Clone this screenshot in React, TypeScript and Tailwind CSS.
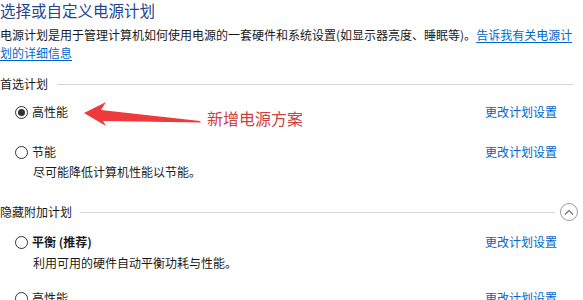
import React from "react";

function Radio({ checked }: { checked?: boolean }) {
  return (
    <span className="flex h-[13px] w-[13px] shrink-0 items-center justify-center rounded-full border border-[#333333] bg-white">
      {checked && <span className="block h-[7px] w-[7px] rounded-full bg-[#333333]" />}
    </span>
  );
}

function PlanRow({ label, checked, bold }: { label: string; checked?: boolean; bold?: boolean }) {
  return (
    <div className="flex h-[18px] items-center pl-[15px]">
      <Radio checked={checked} />
      <span className={"ml-[4px] leading-[18px] " + (bold ? "font-bold" : "")}>{label}</span>
      <a className="ml-auto mr-[26px] leading-[18px] text-[#0066cc]">更改计划设置</a>
    </div>
  );
}

export default function App() {
  return (
    <div className="relative h-[300px] w-[583px] overflow-hidden bg-white text-[12px] text-[#1a1a1a] font-['Noto_Sans_CJK_SC','Noto_Sans',sans-serif]">
      <div className="text-[15.5px] leading-[20px] text-[#24438f]">选择或自定义电源计划</div>
      <div className="mt-[6px] leading-[18px]">
        <div className="whitespace-nowrap">
          电源计划是用于管理计算机如何使用电源的一套硬件和系统设置(如显示器亮度、睡眠等)。
          <a className="text-[#0066cc] underline underline-offset-2">告诉我有关电源计</a>
        </div>
        <div>
          <a className="text-[#0066cc] underline underline-offset-2">划的详细信息</a>
        </div>
      </div>

      <div className="mt-[13px] flex h-[18px] items-center">
        <span className="leading-[18px]">首选计划</span>
        <div className="ml-[9px] mr-[10px] h-px flex-1 bg-[#d5d5d5]" />
      </div>

      <div className="mt-[10px]">
        <PlanRow label="高性能" checked />
      </div>
      <div className="mt-[22px]">
        <PlanRow label="节能" />
      </div>
      <div className="mt-[2px] pl-[33px] leading-[18px]">尽可能降低计算机性能以节能。</div>

      <div className="mt-[22px] flex h-[18px] items-center">
        <span className="leading-[18px]">隐藏附加计划</span>
        <div className="ml-[8px] h-px flex-1 bg-[#d5d5d5]" />
        <span className="ml-[5px] mr-[5px] flex h-[18px] w-[18px] items-center justify-center rounded-full border border-[#9a9a9a]">
          <svg width="10" height="7" viewBox="0 0 10 7">
            <polyline points="1,5.5 5,1.5 9,5.5" fill="none" stroke="#707070" strokeWidth="1.2" />
          </svg>
        </span>
      </div>

      <div className="mt-[12px]">
        <PlanRow label="平衡 (推荐)" bold />
      </div>
      <div className="mt-[3px] pl-[33px] leading-[18px]">利用可用的硬件自动平衡功耗与性能。</div>
      <div className="mt-[17px]">
        <PlanRow label="高性能" />
      </div>

      <svg className="pointer-events-none absolute left-0 top-0" width="583" height="300" viewBox="0 0 583 300">
        <polygon
          points="84,113 106,102 101,110 200,121 201,122.5 103,121 106,126"
          fill="#ee3a3a"
        />
      </svg>
      <div className="absolute left-[207px] top-[108px] text-[16px] leading-[20px] text-[#cf4040]">新增电源方案</div>
    </div>
  );
}
